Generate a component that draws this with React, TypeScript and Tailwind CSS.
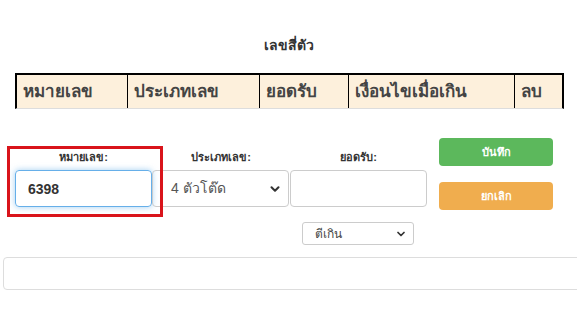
import { ChevronDown } from 'lucide-react';

const font = { fontFamily: '"Liberation Sans", "Noto Sans", Tahoma, sans-serif' };

export default function App() {
    const cols = [
        { label: 'หมายเลข', w: 'w-[112px]' },
        { label: 'ประเภทเลข', w: 'w-[132px]' },
        { label: 'ยอดรับ', w: 'w-[90px]' },
        { label: 'เงื่อนไขเมื่อเกิน', w: 'w-[167px]' },
        { label: 'ลบ', w: 'w-[47px]' },
    ];

    return (
        <main className="relative h-[320px] w-[577px] overflow-hidden bg-white text-[#333]" style={font}>
            {/* Title */}
            <h1 className="pt-[36px] text-center text-[14px] font-bold leading-[18px]">เลขสี่ตัว</h1>

            {/* Table header */}
            <div className="mt-[19px] ml-[15px] flex h-[36px] w-[549px] border-x-2 border-t-2 border-black bg-[#fdf0dc] border-b border-b-[#ddd]">
                {cols.map((c, i) => (
                    <div
                        key={c.label}
                        className={`${c.w} flex items-center px-[6px] text-[17px] font-bold text-[#444] ${i < cols.length - 1 ? 'border-r border-black' : ''}`}
                    >
                        {c.label}
                    </div>
                ))}
            </div>

            {/* Form */}
            <div className="relative mt-[29px] flex pl-[15px]">
                <div className="flex pt-[12px]">
                    <div className="w-[137px]">
                        <p className="text-center text-[11px] font-bold leading-[14px]">หมายเลข:</p>
                        <input
                            defaultValue="6398"
                            className="mt-[6px] h-[37px] w-[137px] rounded-[4px] border border-[#66afe9] px-[12px] text-[14px] font-bold text-[#333] shadow-[0_0_6px_rgba(102,175,233,0.6)] outline-none"
                        />
                    </div>
                    <div className="w-[138px]">
                        <p className="text-center text-[11px] font-bold leading-[14px]">ประเภทเลข:</p>
                        <div className="mt-[6px] flex h-[37px] w-[137px] items-center justify-between rounded-[4px] border border-[#ccc] pl-[18px] pr-[6px] text-[14px] text-[#555]">
                            <span>4 ตัวโต๊ด</span>
                            <ChevronDown size={14} strokeWidth={3.5} className="text-[#333]" />
                        </div>
                    </div>
                    <div className="w-[137px]">
                        <p className="text-center text-[11px] font-bold leading-[14px]">ยอดรับ:</p>
                        <div className="mt-[6px] h-[37px] w-[137px] rounded-[4px] border border-[#ccc]" />
                        <div className="mt-[15px] ml-[12px] flex h-[23px] w-[112px] items-center justify-between rounded-[3px] border border-[#ccc] pl-[12px] pr-[6px] text-[12px] text-[#444]">
                            <span>ตีเกิน</span>
                            <ChevronDown size={12} strokeWidth={3.5} className="text-[#333]" />
                        </div>
                    </div>
                </div>

                <div className="ml-[12px] flex flex-col gap-[16px] pt-0">
                    <button className="h-[28px] w-[114px] rounded-[4px] bg-[#5cb85c] text-[11px] font-bold text-white">บันทึก</button>
                    <button className="h-[28px] w-[114px] rounded-[4px] bg-[#f0ad4e] text-[11px] font-bold text-white">ยกเลิก</button>
                </div>

                {/* Highlight box */}
                <div className="pointer-events-none absolute left-[7px] top-[8px] h-[71px] w-[156px] border-[3px] border-[#d9141b]" />
            </div>

            {/* Bottom panel */}
            <div className="mt-[12px] ml-[3px] h-[33px] w-[590px] rounded-[4px] border border-[#ddd]" />
        </main>
    );
}
